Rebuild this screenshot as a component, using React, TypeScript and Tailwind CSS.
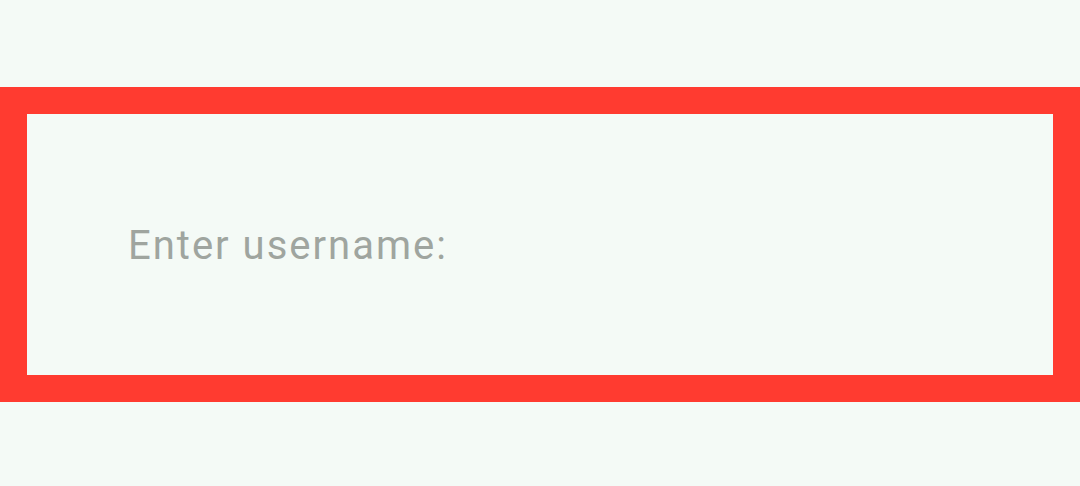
export default function App() {
  return (
    <div className="h-[486px] w-[1080px] bg-[#f4faf6] pt-[87px]" style={{ fontFamily: 'Roboto, sans-serif' }}>
      {/* Username field */}
      <div className="flex h-[315px] items-center border-[27px] border-[#ff3b30] pl-[101px]">
        <span className="pt-[2px] text-[40px] leading-none tracking-[2px] text-[#9fa59f]">Enter username:</span>
      </div>
    </div>
  )
}
